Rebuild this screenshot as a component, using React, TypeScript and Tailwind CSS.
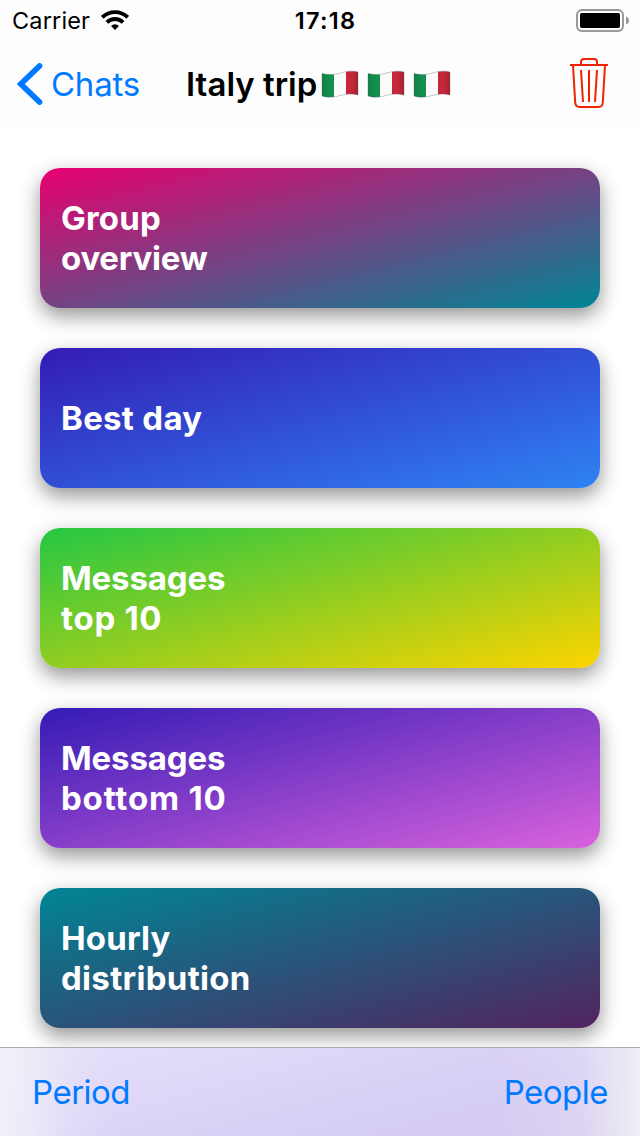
import { clsx } from "clsx";

const cards = [
  {
    lines: [
      { text: "Group", tracking: "tracking-[0.2px]" },
      { text: "overview", tracking: "tracking-[-0.25px]" },
    ],
    gradient: "from-[#e90070] to-[#008595]",
  },
  {
    lines: [{ text: "Best day", tracking: "tracking-[0.3px]" }],
    gradient: "from-[#341bb5] to-[#2e83f3]",
  },
  {
    lines: [
      { text: "Messages", tracking: "tracking-[-0.15px]" },
      { text: "top 10", tracking: "tracking-[0.7px]" },
    ],
    gradient: "from-[#24c743] to-[#fdd400]",
  },
  {
    lines: [
      { text: "Messages", tracking: "tracking-[-0.15px]" },
      { text: "bottom 10", tracking: "tracking-[0.8px]" },
    ],
    gradient: "from-[#341bb5] to-[#d962dd]",
  },
  {
    lines: [
      { text: "Hourly", tracking: "tracking-[0.15px]" },
      { text: "distribution", tracking: "tracking-[0.3px]" },
    ],
    gradient: "from-[#008595] to-[#52245f]",
  },
];

function WifiIcon() {
  return (
    <svg width="28" height="20" viewBox="0 0 28 20" fill="none" stroke="#000" strokeWidth="3.9">
      <path d="M1.3 7.3a18.2 18.2 0 0 1 25.4 0" />
      <path d="M5.9 12.3a11.6 11.6 0 0 1 16.2 0" />
      <path d="M14 20l-4-4.1a5.8 5.8 0 0 1 8 0z" fill="#000" stroke="none" />
    </svg>
  );
}

function BatteryIcon() {
  return (
    <svg width="53" height="23" viewBox="0 0 53 23" fill="none">
      <rect x="1" y="1" width="46" height="21" rx="5" stroke="#999" strokeWidth="2" />
      <rect x="4" y="4" width="40" height="15" rx="2" fill="#000" />
      <path d="M50 7.5c1.8.7 3 2.2 3 4s-1.2 3.3-3 4z" fill="#999" />
    </svg>
  );
}

function TrashIcon() {
  return (
    <svg width="38" height="50" viewBox="0 0 38 50" fill="none" stroke="#ee2400" strokeWidth="2">
      <path d="M0 7h38" />
      <path d="M11 7V4q0-3 3-3h10q3 0 3 3v3" />
      <path d="M3 7l2.2 37.5q.3 4.500 4.300 4.500h19q4 0 4.300-4.500L35 7" />
      <path d="M11 12l2 32M19 12v32M27 12l-2 32" />
    </svg>
  );
}

function ItalyFlag({ id }: { id: string }) {
  const shape = "M1 3.5C8 5.3 14 4.5 19 3.2C25 1.4 31 .3 37 2V25C31 23.3 25 24 19 25.5C13 27.3 7 28 1 26z";
  return (
    <svg width="38" height="29" viewBox="0 0 38 29" role="img" aria-label="Italy">
      <defs>
        <clipPath id={id}>
          <path d={shape} />
        </clipPath>
        <linearGradient id={`${id}-shade`} x1="0" x2="1">
          <stop offset="0" stopColor="#000" stopOpacity=".12" />
          <stop offset=".25" stopColor="#000" stopOpacity="0" />
          <stop offset=".8" stopColor="#000" stopOpacity="0" />
          <stop offset="1" stopColor="#000" stopOpacity=".18" />
        </linearGradient>
      </defs>
      <g clipPath={`url(#${id})`}>
        <path d="M0 0h13v29H0z" fill="#13904f" />
        <path d="M13 0h12v29H13z" fill="#fbfbfb" />
        <path d="M25 0h13v29H25z" fill="#c5283b" />
        <path d="M0 0h38v29H0z" fill={`url(#${id}-shade)`} />
      </g>
      <path d={shape} fill="none" stroke="#555" strokeOpacity=".4" strokeWidth=".8" />
    </svg>
  );
}

function StatusBar() {
  return (
    <div className="grid h-10 grid-cols-3 items-center pl-3 pr-[11px]">
      <div className="flex items-center gap-[11px]">
        <span className="pt-px text-[23.5px] tracking-[0.15px]">Carrier</span>
        <WifiIcon />
      </div>
      <span className="pl-2.5 pt-px text-center text-[23.5px] font-semibold tracking-[1.3px]">17:18</span>
      <div className="flex justify-end">
        <BatteryIcon />
      </div>
    </div>
  );
}

function NavBar() {
  return (
    <div className="flex h-[88px] items-center pl-[17px] pr-8">
      <button className="flex w-[123px] items-center gap-2 text-[#007aff]">
        <svg width="26" height="42" viewBox="0 0 26 42" fill="none" stroke="currentColor" strokeWidth="5.8" strokeLinecap="round">
          <path d="M22.5 3L3.8 21l18.7 18" />
        </svg>
        <span className="pt-0.5 text-[33px] tracking-[-0.2px]">Chats</span>
      </button>
      <div className="ml-[46px] flex items-center">
        <h1 className="w-[131px] whitespace-nowrap pt-0.5 text-[33px] font-semibold">Italy trip</h1>
        <div className="ml-[3.5px] flex gap-2">
          <ItalyFlag id="flag-1" />
          <ItalyFlag id="flag-2" />
          <ItalyFlag id="flag-3" />
        </div>
      </div>
      <button className="mb-0.5 ml-auto" aria-label="Delete">
        <TrashIcon />
      </button>
    </div>
  );
}

export default function App() {
  return (
    <div className="flex h-[1136px] w-[640px] flex-col overflow-hidden bg-white font-['Inter',sans-serif] text-black">
      <header className="h-32 shrink-0 bg-[#fdfdfd]">
        <StatusBar />
        <NavBar />
      </header>

      <main className="flex min-h-0 flex-1 flex-col gap-10 overflow-hidden px-10 pt-10">
        {cards.map(({ lines, gradient }) => (
          <section
            key={gradient}
            className={clsx(
              "flex h-[140px] shrink-0 flex-col justify-center rounded-[20px] bg-linear-to-br/srgb pl-[21px] shadow-[0_8px_20px_rgba(0,0,0,0.42)]",
              gradient
            )}
          >
            {lines.map(({ text, tracking }) => (
              <span key={text} className={clsx("text-[33px] font-bold leading-10 text-white", tracking)}>
                {text}
              </span>
            ))}
          </section>
        ))}
      </main>

      <footer className="flex h-[89px] shrink-0 items-center justify-between border-t border-[#acabb0] bg-[linear-gradient(to_right,#f2f0f8_0,#f2f0f8b0_30px,#f2f0f830_70px,#f2f0f800_110px,#efeef500_500px,#efeef540_580px,#efeef5_640px),linear-gradient(165deg,#e6e1fa,#d6cdf4_70%,#d7c9ee)] px-8 pt-0.5 text-[33px] text-[#007aff]">
        <button className="tracking-[-0.5px]">Period</button>
        <button className="tracking-[-0.5px]">People</button>
      </footer>
    </div>
  );
}
